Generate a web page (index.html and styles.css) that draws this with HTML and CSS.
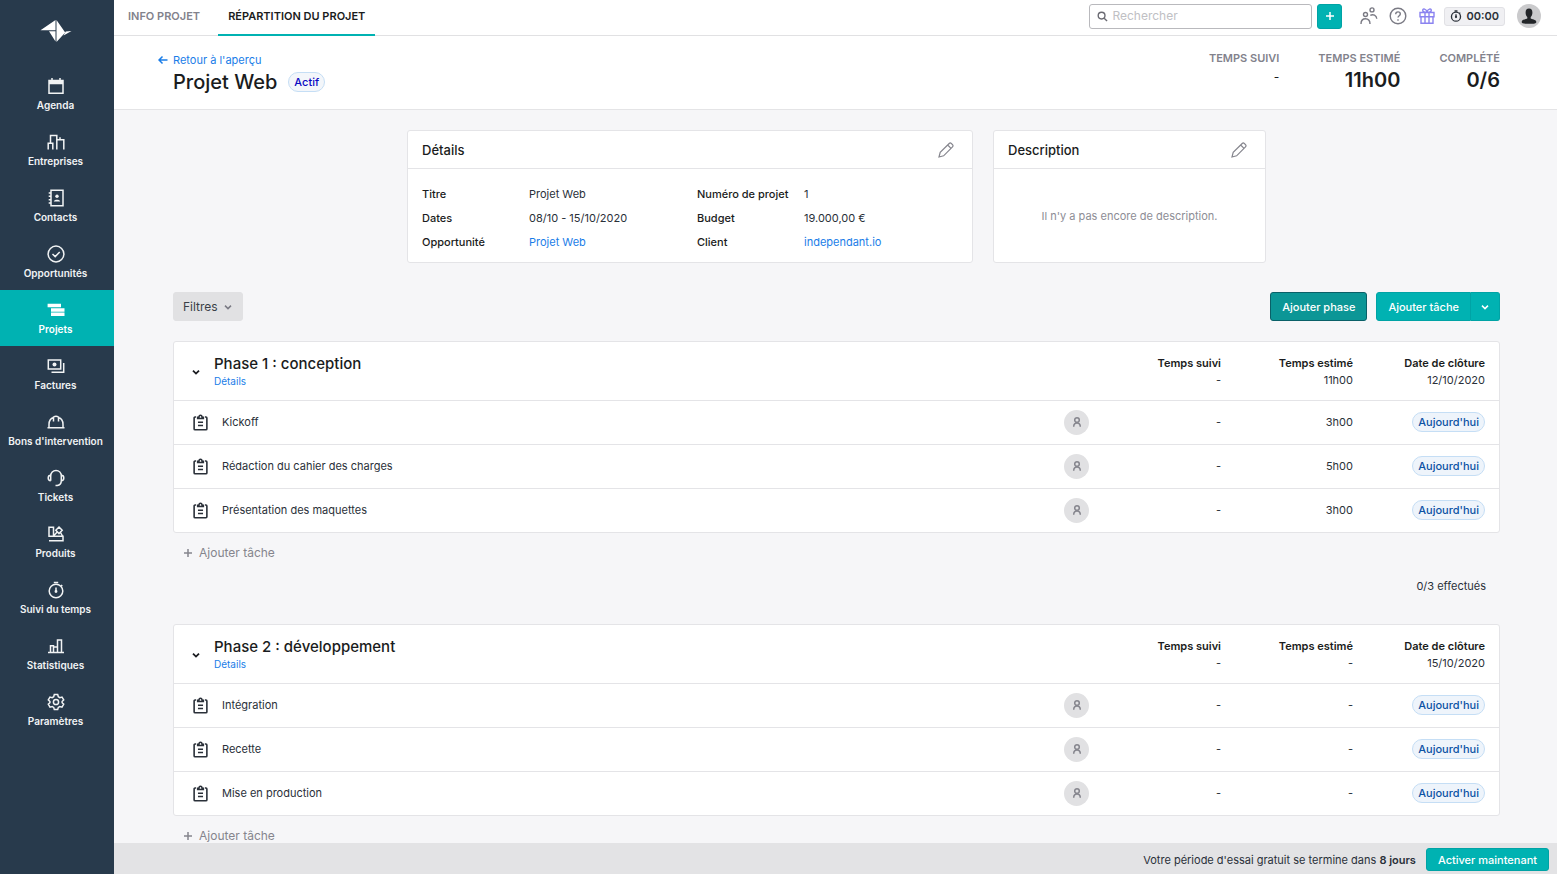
FILE: index.html
```html
<!DOCTYPE html>
<html lang="fr">
<head>
    <meta charset="UTF-8">
    <meta name="viewport" content="width=device-width, initial-scale=1.0">
    <title>Projet Web - Répartition du projet</title>
    <link rel="stylesheet" href="styles.css">
</head>
<body>
    <!-- shared icons -->
    <svg class="sprite" aria-hidden="true">
        <symbol id="clipboard" viewBox="0 0 16 18">
            <path d="M3.300 3.200H2.200a1 1 0 0 0-1 1v11.600a1 1 0 0 0 1 1h11.600a1 1 0 0 0 1-1V4.200a1 1 0 0 0-1-1h-1.100M5 4.800V3.500h1.300C6.400 1.900 7 1.200 8 1.200s1.600.7 1.700 2.300H11v1.300zM5.300 8.800h5.400M5.300 12.200h5.400"/>
        </symbol>
        <symbol id="person" viewBox="0 0 12 12">
            <circle cx="6" cy="4" r="2.300"/>
            <path d="M2.700 10.800c0-2.600 1.400-3.900 3.300-3.900s3.300 1.300 3.300 3.900"/>
        </symbol>
        <symbol id="chevron" viewBox="0 0 10 10">
            <path d="M2 3.600l3 3 3-3"/>
        </symbol>
        <symbol id="plus" viewBox="0 0 10 10">
            <path d="M5 1v8M1 5h8"/>
        </symbol>
        <symbol id="pencil" viewBox="0 0 16 16">
            <path d="M1 15l1.200-4.600L11.200 1.500a1.500 1.500 0 0 1 2.100 0l1.200 1.200a1.500 1.500 0 0 1 0 2.100L5.600 13.800zM9.700 3l3.300 3.300"/>
        </symbol>
        <symbol id="stopwatch" viewBox="0 0 18 18">
            <circle cx="9" cy="10" r="6.800"/>
            <path d="M6.800 1.500h4.400M9 6.500V10M14 4l1.300 1.300"/>
            <circle cx="9" cy="10.500" r=".7"/>
        </symbol>
    </svg>

    <div class="app">
        <nav class="sidebar">
            <a href="#" class="logo" aria-label="Accueil">
                <svg viewBox="0 0 32 24" width="32" height="24">
                    <path class="fill" d="M.5 11.200L15.500 1v10.200zM9 12.200h6.500v10.300zM16.500 1l8.700 12.500L16.500 23zM25.800 12.400l5.700-.4-8 4.500z"/>
                </svg>
            </a>
            <a href="#" class="nav-item">
                <svg class="icon" viewBox="0 0 18 18"><path d="M2 3.500h14v12.700H2z"/><path d="M2 4.500h14M2 6h14" stroke-width="2.400"/><path d="M5 1v3M13 1v3"/></svg>
                <span>Agenda</span>
            </a>
            <a href="#" class="nav-item">
                <svg class="icon" viewBox="0 0 18 18"><path d="M1.200 16.500v-6.300h4.600v6.300M3.500 10V2.500h6.300v14M9.800 6.800h7v9.700M13 6.500V4.200"/></svg>
                <span>Entreprises</span>
            </a>
            <a href="#" class="nav-item">
                <svg class="icon" viewBox="0 0 18 18"><path d="M4 1.300h12v15.400H4zM1.700 4h2M1.700 7.300h2M1.700 10.700h2M1.700 14h2"/><circle class="fill" cx="10" cy="7.300" r="1.700"/><path class="fill" d="M6.800 12.500c.3-2.500 6.100-2.500 6.400 0z"/></svg>
                <span>Contacts</span>
            </a>
            <a href="#" class="nav-item">
                <svg class="icon" viewBox="0 0 18 18"><circle cx="9" cy="9" r="7.900"/><path d="M5.500 9l2.700 2.600 4.500-4.700"/></svg>
                <span>Opportunités</span>
            </a>
            <a href="#" class="nav-item active" aria-current="page">
                <svg class="icon" viewBox="0 0 18 18"><path class="fill" d="M.6 2.800h13.400v3.500H.6zM4 7.200h13.500v3.500H4zM4 11.600h13.500v3.500H4z"/></svg>
                <span>Projets</span>
            </a>
            <a href="#" class="nav-item">
                <svg class="icon" viewBox="0 0 18 18"><path d="M1.300 3h12.400v9H1.300zM4.500 15.200h12.200V6"/><circle class="fill" cx="7.500" cy="7.500" r="2"/></svg>
                <span>Factures</span>
            </a>
            <a href="#" class="nav-item">
                <svg class="icon" viewBox="0 0 18 18"><path d="M.5 14.800h17M2 14.500v-3C2 8 4 5.200 6.500 4.500M16 14.500v-3c0-3.500-2-6.300-4.500-7M6.500 8.500V4c1.500-1 3.500-1 5 0v4.500"/></svg>
                <span>Bons d'intervention</span>
            </a>
            <a href="#" class="nav-item">
                <svg class="icon" viewBox="0 0 18 18"><path d="M3.700 11.800V7c0-3.300 2.300-5.500 5.300-5.500s5.300 2.200 5.300 5.500v4.800c0 2.500-1.500 4.400-4 4.700H8.500M3.700 6.300C1.900 6.300 1.200 7.400 1.200 9s.7 2.700 2.500 2.700M14.300 6.300c1.800 0 2.500 1.100 2.500 2.700s-.7 2.700-2.500 2.700"/></svg>
                <span>Tickets</span>
            </a>
            <a href="#" class="nav-item">
                <svg class="icon" viewBox="0 0 18 18"><path d="M2 2.200h4.500v9H2zM2 11.200h14v4.600H2M12 2l3.200 3.300L12 8.600 8.800 5.300zM6.500 11l3.700-4M13.500 7.500l2 3.500"/></svg>
                <span>Produits</span>
            </a>
            <a href="#" class="nav-item">
                <svg class="icon"><use href="#stopwatch"/></svg>
                <span>Suivi du temps</span>
            </a>
            <a href="#" class="nav-item">
                <svg class="icon" viewBox="0 0 18 18"><path d="M1 15.500h16M3.500 15V8.800h3V15M6.500 10h4v5M10.500 15V3h4v12"/></svg>
                <span>Statistiques</span>
            </a>
            <a href="#" class="nav-item">
                <svg class="icon" viewBox="0 0 18 18"><path d="M7.300 1.500h3.400l.6 2.200 1.500.9 2.200-.6 1.700 2.900L15.100 8.500v1.200l1.600 1.500-1.700 2.900-2.200-.6-1.500.9-.6 2.200H7.300l-.6-2.200-1.500-.9-2.200.6-1.700-2.900 1.600-1.500V8.500L1.300 6.900 3 4l2.200.6 1.500-.9z"/><circle cx="9" cy="9" r="2.600"/></svg>
                <span>Paramètres</span>
            </a>
        </nav>

        <div class="main">
            <header class="topbar">
                <div class="tabs">
                    <a href="#" class="tab">Info projet</a>
                    <a href="#" class="tab active" aria-current="page">Répartition du projet</a>
                </div>
                <div class="tools">
                    <label class="search">
                        <svg viewBox="0 0 12 12" width="11" height="11"><circle cx="5" cy="5" r="3.700"/><path d="M7.800 7.800L11 11"/></svg>
                        <input type="search" placeholder="Rechercher" aria-label="Rechercher">
                    </label>
                    <button class="btn btn-add" aria-label="Ajouter"><svg width="10" height="10"><use href="#plus"/></svg></button>
                    <button class="tool" aria-label="Équipe">
                        <svg viewBox="0 0 18 18" width="18" height="18"><circle cx="5.500" cy="7.500" r="2"/><circle cx="12" cy="2.900" r="2"/><path d="M1 17c0-3.500 1.800-5.200 4.500-5.200S10 13.500 10 17M10.300 8.300c2.800-1.400 6.200-.2 6.500 3.500"/></svg>
                    </button>
                    <button class="tool" aria-label="Aide">
                        <svg viewBox="0 0 18 18" width="18" height="18"><circle cx="9" cy="9" r="7.800"/><path d="M6.700 7.200C6.700 5.700 7.700 4.900 9 4.900s2.300.8 2.300 2.100c0 1.700-2.300 1.700-2.300 3.600M9 12.200v1.500"/></svg>
                    </button>
                    <button class="tool tool-gift" aria-label="Parrainage">
                        <svg viewBox="0 0 18 18" width="18" height="18"><path d="M2 5.500h14v4.200H2zM3 9.700h12v6.500H3zM7 5.500v10.700M11 5.500v10.700M9 5.300C7.500 5.300 4.700 5 4.700 3.200S8.300 1.500 9 5c.7-3.500 4.300-3.600 4.300-1.800S10.500 5.300 9 5.300"/></svg>
                    </button>
                    <button class="timer">
                        <svg width="12" height="12"><use href="#stopwatch"/></svg>
                        00:00
                    </button>
                    <button class="avatar" aria-label="Mon compte">
                        <svg viewBox="0 0 24 24" width="24" height="24"><path d="M12 4.500c2.300 0 3.400 1.500 3.400 3.900 0 2-.7 3.700-1.700 4.500v1.600c1 .9 5.300.9 5.600 3.200.2 1.500-1.500 2.100-7.300 2.100s-7.500-.6-7.300-2.100c.3-2.300 4.600-2.300 5.600-3.200v-1.600c-1-.8-1.700-2.500-1.700-4.500 0-2.400 1.100-3.900 3.400-3.900z"/></svg>
                    </button>
                </div>
            </header>

            <div class="page-header">
                <div class="heading">
                    <a href="#" class="back">
                        <svg viewBox="0 0 10 10" width="10" height="10"><path d="M4.500 1.500L1 5l3.500 3.500M1 5h8.500"/></svg>
                        Retour à l'aperçu
                    </a>
                    <div class="title">
                        <h1>Projet Web</h1>
                        <span class="badge badge-active">Actif</span>
                    </div>
                </div>
                <dl class="stats">
                    <div class="stat"><dt>Temps suivi</dt><dd class="empty">-</dd></div>
                    <div class="stat"><dt>Temps estimé</dt><dd>11h00</dd></div>
                    <div class="stat"><dt>Complété</dt><dd>0/6</dd></div>
                </dl>
            </div>

            <main class="content">
                <div class="cards">
                    <section class="card">
                        <div class="card-header">
                            <h2>Détails</h2>
                            <button class="edit" aria-label="Modifier les détails"><svg width="16" height="16"><use href="#pencil"/></svg></button>
                        </div>
                        <dl class="details">
                            <dt>Titre</dt><dd>Projet Web</dd>
                            <dt>Numéro de projet</dt><dd>1</dd>
                            <dt>Dates</dt><dd>08/10 - 15/10/2020</dd>
                            <dt>Budget</dt><dd>19.000,00 €</dd>
                            <dt>Opportunité</dt><dd><a href="#">Projet Web</a></dd>
                            <dt>Client</dt><dd><a href="#">independant.io</a></dd>
                        </dl>
                    </section>
                    <section class="card">
                        <div class="card-header">
                            <h2>Description</h2>
                            <button class="edit" aria-label="Modifier la description"><svg width="16" height="16"><use href="#pencil"/></svg></button>
                        </div>
                        <p class="no-description">Il n'y a pas encore de description.</p>
                    </section>
                </div>

                <div class="toolbar">
                    <button class="btn btn-filter">Filtres <svg width="10" height="10"><use href="#chevron"/></svg></button>
                    <div class="actions">
                        <button class="btn btn-phase">Ajouter phase</button>
                        <div class="split">
                            <button class="btn">Ajouter tâche</button>
                            <button class="btn btn-more" aria-label="Plus d'options"><svg width="10" height="10"><use href="#chevron"/></svg></button>
                        </div>
                    </div>
                </div>

                <section class="phase">
                    <div class="card">
                        <table>
                            <thead>
                                <tr>
                                    <th class="col-name" colspan="2">
                                        <div class="phase-head">
                                            <button class="toggle" aria-label="Replier la phase"><svg width="10" height="10"><use href="#chevron"/></svg></button>
                                            <div class="phase-name"><h3>Phase 1 : conception</h3><a href="#">Détails</a></div>
                                        </div>
                                    </th>
                                    <th>Temps suivi <span>-</span></th>
                                    <th>Temps estimé <span>11h00</span></th>
                                    <th>Date de clôture <span>12/10/2020</span></th>
                                </tr>
                            </thead>
                            <tbody>
                                <tr>
                                    <td class="col-name"><div class="task"><svg><use href="#clipboard"/></svg>Kickoff</div></td>
                                    <td><span class="assignee"><svg><use href="#person"/></svg></span></td>
                                    <td>-</td>
                                    <td>3h00</td>
                                    <td><span class="badge">Aujourd'hui</span></td>
                                </tr>
                                <tr>
                                    <td class="col-name"><div class="task"><svg><use href="#clipboard"/></svg>Rédaction du cahier des charges</div></td>
                                    <td><span class="assignee"><svg><use href="#person"/></svg></span></td>
                                    <td>-</td>
                                    <td>5h00</td>
                                    <td><span class="badge">Aujourd'hui</span></td>
                                </tr>
                                <tr>
                                    <td class="col-name"><div class="task"><svg><use href="#clipboard"/></svg>Présentation des maquettes</div></td>
                                    <td><span class="assignee"><svg><use href="#person"/></svg></span></td>
                                    <td>-</td>
                                    <td>3h00</td>
                                    <td><span class="badge">Aujourd'hui</span></td>
                                </tr>
                            </tbody>
                        </table>
                    </div>
                    <button class="add-task"><svg width="10" height="10"><use href="#plus"/></svg> Ajouter tâche</button>
                    <p class="done">0/3 effectués</p>
                </section>

                <section class="phase">
                    <div class="card">
                        <table>
                            <thead>
                                <tr>
                                    <th class="col-name" colspan="2">
                                        <div class="phase-head">
                                            <button class="toggle" aria-label="Replier la phase"><svg width="10" height="10"><use href="#chevron"/></svg></button>
                                            <div class="phase-name"><h3>Phase 2 : développement</h3><a href="#">Détails</a></div>
                                        </div>
                                    </th>
                                    <th>Temps suivi <span>-</span></th>
                                    <th>Temps estimé <span>-</span></th>
                                    <th>Date de clôture <span>15/10/2020</span></th>
                                </tr>
                            </thead>
                            <tbody>
                                <tr>
                                    <td class="col-name"><div class="task"><svg><use href="#clipboard"/></svg>Intégration</div></td>
                                    <td><span class="assignee"><svg><use href="#person"/></svg></span></td>
                                    <td>-</td>
                                    <td>-</td>
                                    <td><span class="badge">Aujourd'hui</span></td>
                                </tr>
                                <tr>
                                    <td class="col-name"><div class="task"><svg><use href="#clipboard"/></svg>Recette</div></td>
                                    <td><span class="assignee"><svg><use href="#person"/></svg></span></td>
                                    <td>-</td>
                                    <td>-</td>
                                    <td><span class="badge">Aujourd'hui</span></td>
                                </tr>
                                <tr>
                                    <td class="col-name"><div class="task"><svg><use href="#clipboard"/></svg>Mise en production</div></td>
                                    <td><span class="assignee"><svg><use href="#person"/></svg></span></td>
                                    <td>-</td>
                                    <td>-</td>
                                    <td><span class="badge">Aujourd'hui</span></td>
                                </tr>
                            </tbody>
                        </table>
                    </div>
                    <button class="add-task"><svg width="10" height="10"><use href="#plus"/></svg> Ajouter tâche</button>
                </section>
            </main>

            <footer class="trial">
                <p>Votre période d'essai gratuit se termine dans <strong>8 jours</strong></p>
                <button class="btn btn-trial">Activer maintenant</button>
            </footer>
        </div>
    </div>
</body>
</html>
```

FILE: styles.css
```css
* {
    box-sizing: border-box;
}

body {
    margin: 0;
    font-family: Inter, sans-serif;
    font-size: 11px;
    line-height: 16px;
    color: #2a3039;
    background: #f6f6f8;
}

h1, h2, h3, p, dl, dd {
    margin: 0;
}

a {
    color: #1a7de8;
    text-decoration: none;
}

button, input {
    font: inherit;
    color: inherit;
}

button {
    padding: 0;
    border: none;
    background: none;
    cursor: pointer;
}

svg {
    display: block;
    flex: none;
    fill: none;
    stroke: currentColor;
    stroke-width: 1.5;
}

.fill {
    fill: currentColor;
    stroke: none;
}

.sprite {
    display: none;
}

.app {
    display: flex;
    height: 100vh;
}

/* sidebar */
.sidebar {
    flex: none;
    width: 114px;
    background: #283a4c;
    color: #f1f3f4;
}

.logo {
    display: flex;
    justify-content: center;
    height: 66px;
    padding: 19px 3px 0 0;
    color: #fff;
}

.nav-item {
    display: flex;
    flex-direction: column;
    align-items: center;
    gap: 2px;
    height: 56px;
    padding: 11px 3px 0 0;
    font-size: 10px;
    font-weight: 600;
    color: inherit;
    white-space: nowrap;
}

.nav-item.active {
    background: #00b2b2;
    color: #fff;
}

.icon {
    width: 18px;
    height: 18px;
}

.main {
    flex: 1;
    display: flex;
    flex-direction: column;
    min-width: 0;
}

/* top bar */
.topbar {
    flex: none;
    display: flex;
    justify-content: space-between;
    height: 36px;
    background: #fff;
    border-bottom: 1px solid #e1e1e3;
}

.tabs {
    display: flex;
    gap: 8px;
    padding-left: 4px;
}

.tab {
    height: 36px;
    padding: 8px 10px;
    font-weight: 600;
    text-transform: uppercase;
    color: #82828c;
}

.tab.active {
    color: #1a1c20;
    border-bottom: 2px solid #00b2b2;
}

.tools {
    display: flex;
    align-items: center;
    padding: 0 16px 3px 0;
}

.search {
    display: flex;
    align-items: center;
    gap: 4px;
    width: 223px;
    height: 25px;
    margin-right: 5px;
    padding: 0 7px;
    border: 1px solid #b9b9bd;
    border-radius: 3px;
    color: #6a6a72;
}

.search input {
    flex: 1;
    min-width: 0;
    padding: 0;
    border: none;
    outline: none;
    background: none;
    font-size: 12px;
}

.search input::placeholder {
    color: #c0c0c4;
}

.tool {
    margin-right: 11px;
    color: #7a7a84;
}

.tool svg {
    stroke-width: 1.4;
}

.tool-gift {
    margin-right: 8px;
    color: #8b83f0;
}

.timer {
    display: flex;
    align-items: center;
    gap: 4px;
    height: 19px;
    margin-right: 12px;
    padding: 0 5px;
    border: 1px solid #e1e1e5;
    border-radius: 3px;
    background: #f0f0f3;
    font-weight: 600;
}

.timer svg {
    stroke-width: 2;
}

.avatar {
    border-radius: 50%;
    background: #cacacc;
    color: #222528;
}

.avatar svg {
    fill: currentColor;
    stroke: none;
}

/* buttons */
.btn {
    display: flex;
    align-items: center;
    justify-content: center;
    height: 29px;
    padding: 0 11px;
    border: 1px solid #00a3a5;
    border-radius: 3px;
    background: #00b2b2;
    color: #fff;
    font-weight: 500;
}

.btn-add {
    width: 25px;
    height: 25px;
    margin-right: 18px;
    padding: 0;
}

.btn-phase {
    border-color: #0a6068;
    background: #0c9696;
}

.btn-filter {
    gap: 5px;
    padding: 0 9px;
    border-color: #e1e1e3;
    background: #e1e1e3;
    color: #3b3f47;
    font-size: 12px;
    font-weight: 400;
}

.btn-filter svg {
    color: #7a7a84;
}

.split {
    display: flex;
}

.split .btn:first-child {
    border-radius: 3px 0 0 3px;
}

.split .btn-more {
    width: 29px;
    padding: 0;
    border-left: none;
    border-radius: 0 3px 3px 0;
}

/* page header */
.page-header {
    flex: none;
    display: flex;
    justify-content: space-between;
    height: 74px;
    padding: 16px 57px 0 59px;
    background: #fff;
    border-bottom: 1px solid #e4e4e6;
}

.back {
    display: flex;
    align-items: center;
    gap: 5px;
    margin-left: -15px;
}

.title {
    display: flex;
    align-items: center;
    gap: 11px;
    margin-top: 2px;
}

h1 {
    font-size: 20px;
    font-weight: 500;
    line-height: 24px;
    color: #1a1c20;
}

.badge {
    display: inline-block;
    height: 20px;
    padding: 1px 5px;
    border: 1px solid #c5def5;
    border-radius: 10px;
    background: #eef4fb;
    color: #0c52a4;
    font-weight: 500;
}

.badge-active {
    background: #f3f6fa;
    color: #0b09c2;
}

.stats {
    display: flex;
    gap: 39px;
    text-align: right;
}

.stat dt {
    font-weight: 600;
    line-height: 12px;
    text-transform: uppercase;
    color: #82828c;
}

.stat dd {
    margin-top: 4px;
    font-size: 20px;
    font-weight: 600;
    line-height: 24px;
    color: #1a1c20;
}

.stat .empty {
    font-size: 12px;
    font-weight: 400;
    line-height: 18px;
}

/* content */
.content {
    flex: 1;
    min-height: 0;
    padding: 20px 57px 30px 59px;
    overflow-y: auto;
    scrollbar-width: none;
}

.card {
    border: 1px solid #e4e4e7;
    border-radius: 3px;
    background: #fff;
}

.cards {
    display: grid;
    grid-template-columns: 1fr 273px;
    gap: 20px;
    max-width: 859px;
    margin: 0 auto;
}

.card-header {
    display: flex;
    align-items: center;
    justify-content: space-between;
    height: 38px;
    padding: 0 18px 0 14px;
    border-bottom: 1px solid #e4e4e7;
}

h2 {
    font-size: 13px;
    font-weight: 500;
    color: #1a1c20;
}

.edit {
    color: #85858d;
}

.edit svg {
    stroke-width: 1.2;
}

.details {
    display: grid;
    grid-template-columns: 107px 168px 107px 1fr;
    row-gap: 8px;
    padding: 17px 14px 12px;
}

.details dt {
    font-weight: 500;
    color: #1a1c20;
}

.no-description {
    padding: 39px 14px 0;
    text-align: center;
    color: #8d8d95;
}

.toolbar {
    display: flex;
    justify-content: space-between;
    margin: 29px 0 20px;
}

.actions {
    display: flex;
    gap: 9px;
}

/* phases */
table {
    width: 100%;
    border-collapse: collapse;
    table-layout: fixed;
}

th, td {
    width: 132px;
    padding: 0 14px 0 0;
    text-align: right;
    white-space: nowrap;
}

th {
    height: 58px;
    padding-top: 13px;
    vertical-align: top;
    font-weight: 600;
    color: #1a1c20;
}

th > span {
    display: block;
    font-weight: 400;
    line-height: 18px;
    color: #2a3039;
}

td {
    height: 44px;
    border-top: 1px solid #e4e4e7;
}

.col-name {
    width: auto;
    text-align: left;
}

.phase-head {
    display: flex;
    align-items: center;
    gap: 13px;
    padding-left: 17px;
}

.toggle svg {
    stroke-width: 1.8;
}

.phase-name a {
    display: block;
    font-size: 10px;
    font-weight: 400;
}

h3 {
    font-size: 15px;
    font-weight: 500;
    line-height: 18px;
    color: #1a1c20;
}

.task {
    display: flex;
    align-items: center;
    gap: 14px;
    padding-left: 19px;
}

.task svg {
    width: 15px;
    height: 17px;
    stroke-width: 1.7;
}

.assignee {
    display: inline-flex;
    align-items: center;
    justify-content: center;
    width: 25px;
    height: 25px;
    border-radius: 50%;
    background: #e1e1e3;
    color: #85858d;
    vertical-align: middle;
}

.assignee svg {
    width: 12px;
    height: 12px;
}

.add-task {
    display: flex;
    align-items: center;
    gap: 6px;
    margin: 12px 0 0 10px;
    font-size: 12px;
    color: #85858d;
}

.done {
    margin: 17px 14px 30px 0;
    text-align: right;
}

/* trial bar */
.trial {
    flex: none;
    display: flex;
    align-items: center;
    justify-content: flex-end;
    gap: 10px;
    height: 31px;
    padding: 2px 8px 0;
    background: #e3e3e5;
}

.trial strong {
    font-weight: 600;
}

.btn-trial {
    height: 23px;
}
```
